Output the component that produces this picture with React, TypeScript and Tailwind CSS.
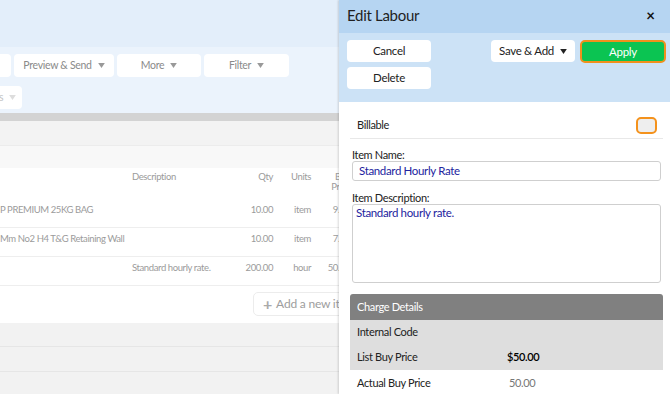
import { FC } from 'react';

const Caret: FC<{ className?: string }> = ({ className }) => (
    <svg viewBox="0 0 8 6" className={className} width="7" height="5">
        <path d="M0 0h8L4 6z" fill="currentColor" />
    </svg>
);

const ToolButton: FC<{ label: string; className?: string }> = ({ label, className }) => (
    <div
        className={`h-[23px] bg-white rounded-[4px] flex items-center justify-center gap-[6px] text-[10.5px] tracking-[-0.3px] text-[#8a8a8a] ${className ?? ''}`}
    >
        {label}
        <Caret className="text-[#999]" />
    </div>
);

const rows = [
    { name: 'P PREMIUM 25KG BAG', desc: '', qty: '10.00', unit: 'item', price: '9.95' },
    { name: 'Mm No2 H4 T&G Retaining Wall', desc: '', qty: '10.00', unit: 'item', price: '7.50' },
    { name: '', desc: 'Standard hourly rate.', qty: '200.00', unit: 'hour', price: '50.00' },
];

const Background: FC = () => (
    <div className="w-[339px] shrink-0 h-full overflow-hidden flex flex-col bg-white">
        <div className="h-[47px] bg-[#e3eefa]" />
        <div className="h-[66px] bg-[#ebf3fc] flex flex-col gap-[9px] pt-[7px]">
            <div className="flex gap-[3px]">
                <div className="w-[11px] h-[23px] bg-white rounded-r-[4px]" />
                <ToolButton label="Preview & Send" className="w-[100px]" />
                <ToolButton label="More" className="w-[84px]" />
                <ToolButton label="Filter" className="w-[85px]" />
            </div>
            <div className="w-[22px] h-[23px] bg-white rounded-r-[4px] flex items-center gap-[5px] text-[10.5px] text-[#c4c4c4] overflow-hidden">
                <span className="-ml-[1px]">s</span>
                <Caret className="text-[#ddd]" />
            </div>
        </div>
        <div className="h-[8px] bg-[#d3d3d3]" />
        <div className="h-[24px] bg-[#f3f3f3]" />
        <div className="h-[23px] bg-[#f8f8f8] border-t border-[#ececec]" />
        <div className="w-[360px] flex flex-col text-[9.5px] tracking-[-0.4px] text-[#9b9b9b] whitespace-nowrap">
            <div className="h-[31px] flex pt-[4px] leading-[10px]">
                <div className="w-[132px]" />
                <div className="w-[100px]">Description</div>
                <div className="w-[41px] text-right">Qty</div>
                <div className="w-[38px] text-right">Units</div>
                <div className="w-[39px] text-right flex flex-col items-end">
                    <span>Buy</span>
                    <span>Price</span>
                </div>
            </div>
            {rows.map((r) => (
                <div key={r.qty + r.name} className="h-[29px] flex pt-[4px] leading-[14px] border-b border-[#eeeeee]">
                    <div className="w-[132px]">{r.name}</div>
                    <div className="w-[100px]">{r.desc}</div>
                    <div className="w-[41px] text-right">{r.qty}</div>
                    <div className="w-[38px] text-right">{r.unit}</div>
                    <div className="w-[39px] text-right">{r.price}</div>
                </div>
            ))}
            <div className="h-[37px] flex items-start pt-[6px] pl-[253px]">
                <div className="h-[24px] w-[100px] shrink-0 border border-[#ececec] rounded-[5px] flex items-center gap-[4px] pl-[9px] text-[12px] tracking-[-0.2px] text-[#9d9d9d]">
                    <span className="text-[16px] leading-none text-[#aaa] font-bold">+</span>
                    Add a new item
                </div>
            </div>
        </div>
        <div className="flex-1 bg-[#f2f2f2] flex flex-col">
            <div className="h-[24px] border-b border-[#e6e6e6]" />
            <div className="h-[25px] border-b border-[#e6e6e6]" />
        </div>
    </div>
);

const PanelButton: FC<{ children: React.ReactNode; className?: string }> = ({ children, className }) => (
    <div
        className={`w-[84px] h-[22px] bg-white rounded-[4px] flex items-center justify-center text-[11.5px] tracking-[-0.3px] text-[#222] ${className ?? ''}`}
    >
        {children}
    </div>
);

const EditPanel: FC = () => (
    <div className="flex-1 h-full flex flex-col bg-white shadow-[-1px_0_2px_rgba(0,0,0,0.15)] overflow-hidden">
        <div className="h-[33px] shrink-0 bg-[#b6d5f2] flex items-center justify-between pl-[8px] pr-[15px]">
            <span className="text-[15px] tracking-[-0.3px] text-[#1f1f1f] -mt-[2px]">Edit Labour</span>
            <span className="text-[15px] font-bold text-[#111] leading-none -mt-[3px]">×</span>
        </div>
        <div className="h-[69px] shrink-0 bg-[#cce2f6] flex justify-between pl-[8px] pr-[4px] pt-[7px]">
            <div className="flex flex-col gap-[5px]">
                <PanelButton>Cancel</PanelButton>
                <PanelButton>Delete</PanelButton>
            </div>
            <div className="flex gap-[5px] items-start">
                <PanelButton className="gap-[6px]">
                    Save &amp; Add
                    <Caret className="text-[#222]" />
                </PanelButton>
                <div className="w-[86px] h-[23px] rounded-[5px] bg-[#0bc452] border-2 border-[#f0901d] flex items-center justify-center text-[11.5px] tracking-[-0.3px] text-white">
                    Apply
                </div>
            </div>
        </div>
        <div className="flex-1 flex flex-col pl-[11px] pr-[7px] text-[11px] tracking-[-0.35px]">
            <div className="h-[37px] pt-[10px] shrink-0 flex items-center justify-between border-b border-[#e8e8e8] pl-[7px] pr-[6px]">
                <span className="text-[#222]">Billable</span>
                <div className="w-[21px] h-[17px] rounded-[5px] border-2 border-[#f4921c] bg-[#eeeeee]" />
            </div>
            <div className="pl-[2px] pr-[2px] flex flex-col">
                <label className="mt-[10px] leading-[12px] text-[#222]">Item Name:</label>
                <div className="h-[20px] border border-[#cfcfcf] rounded-[3px] flex items-center pl-[6px] text-[11.5px] text-[#23239e]">
                    Standard Hourly Rate
                </div>
                <label className="mt-[11px] leading-[12px] text-[#222]">Item Description:</label>
                <div className="h-[79px] border border-[#cfcfcf] rounded-[3px] pl-[3px] pt-[1px] text-[11.5px] text-[#23239e] leading-[14px]">
                    Standard hourly rate.
                </div>
            </div>
            <div className="mt-[11px]">
                <div className="h-[26px] bg-[#808080] rounded-t-[3px] flex items-center pl-[7px] text-white">
                    Charge Details
                </div>
                <div className="bg-[#dedede]">
                    <div className="h-[25px] flex items-center pl-[7px] text-[#222]">Internal Code</div>
                    <div className="h-[25px] flex items-center pl-[7px] text-[#222]">
                        <span className="w-[150px]">List Buy Price</span>
                        <span className="text-[#000] font-semibold">$50.00</span>
                    </div>
                </div>
                <div className="h-[26px] flex items-center pl-[7px] text-[#222]">
                    <span className="w-[152px]">Actual Buy Price</span>
                    <span className="text-[#777]">50.00</span>
                </div>
            </div>
        </div>
    </div>
);

const App: FC = () => {
    return (
        <div className="w-[670px] h-[394px] flex overflow-hidden font-['Lato','Noto_Sans',sans-serif]">
            <Background />
            <EditPanel />
        </div>
    );
};

export default App;
